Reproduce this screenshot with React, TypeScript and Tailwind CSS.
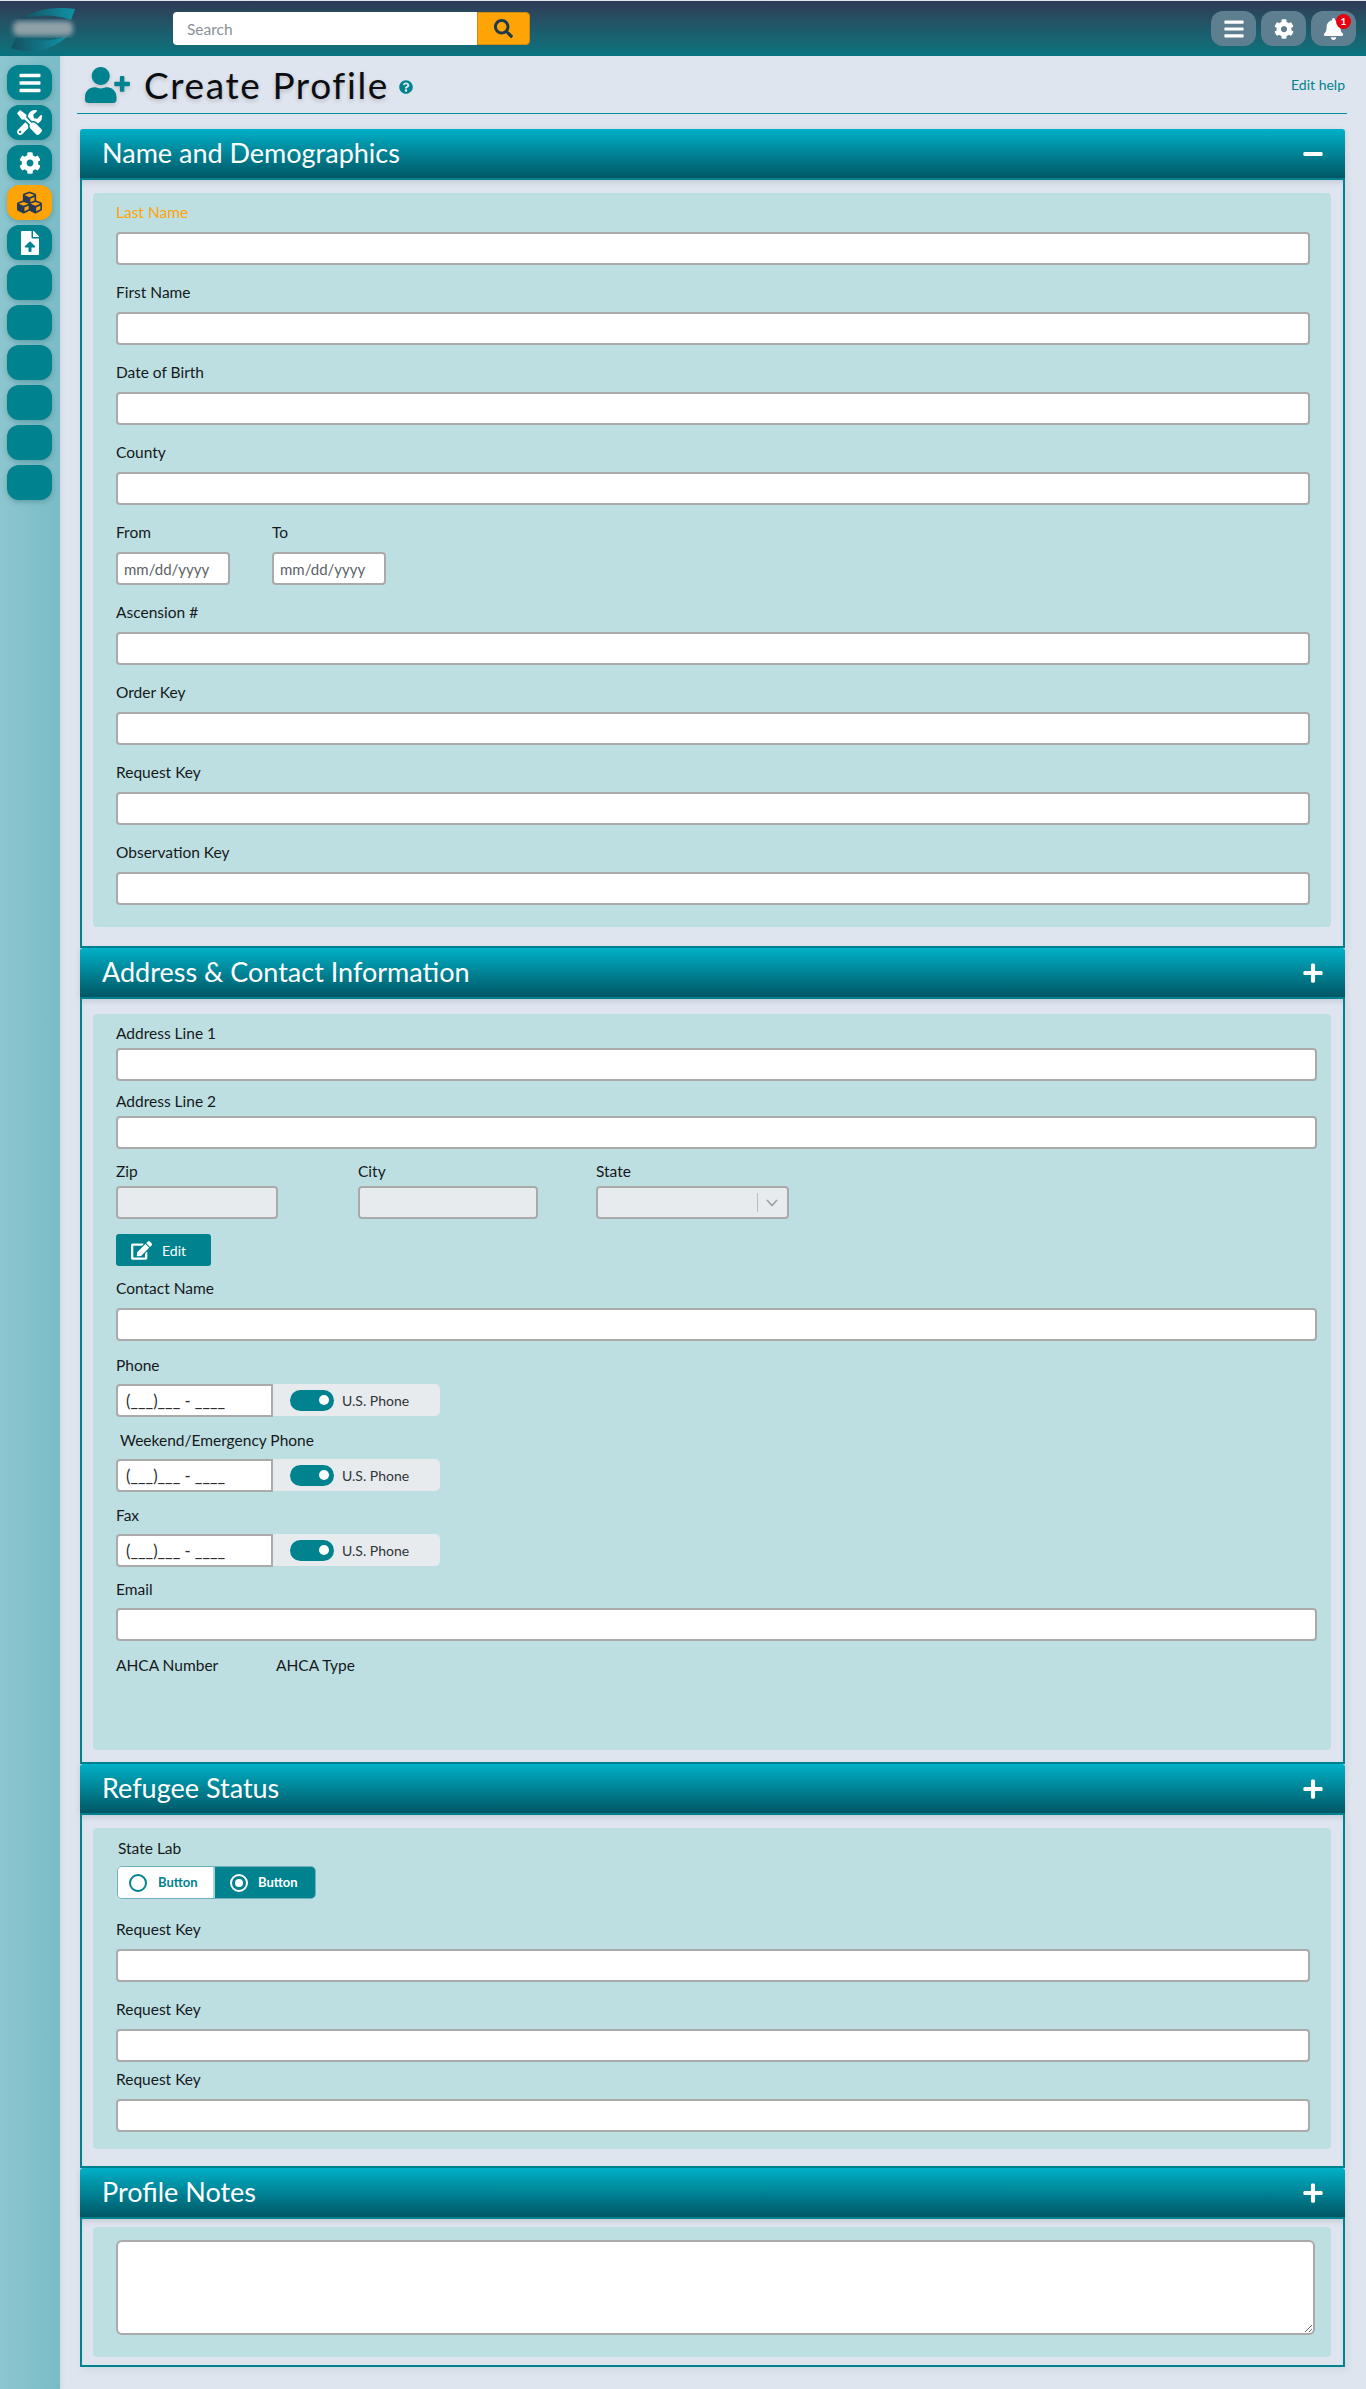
import React from 'react';
import {
    FaBars,
    FaBell,
    FaCog,
    FaCubes,
    FaEdit,
    FaFileUpload,
    FaMinus,
    FaPlus,
    FaQuestionCircle,
    FaSearch,
    FaTools,
    FaUserPlus
} from 'react-icons/fa';

const railBtn = "w-[45px] h-[35px] rounded-[12px] flex items-center justify-center text-white bg-[#00828f] shadow-[0_2px_5px_rgba(0,60,70,0.25)]";
const topBtn = "w-[45px] h-[35px] rounded-[12px] flex items-center justify-center text-white bg-[#5e7f90]";
const inputBase = "block h-[33px] border-2 border-[#aaaaaa] rounded-[4px] bg-white outline-none";
const disabledBase = "block h-[33px] border-2 border-[#aaaaaa] rounded-[4px] bg-[#e7ebee] outline-none";

function Logo() {
    return (
        <svg width="68" height="50" viewBox="0 0 68 50" className="ml-[9px]">
            <defs>
                <linearGradient id="arc" x1="0" y1="0" x2="1" y2="0">
                    <stop offset="0" stopColor="#14505f" />
                    <stop offset="1" stopColor="#0e93a6" />
                </linearGradient>
                <filter id="smear"><feGaussianBlur stdDeviation="2.5" /></filter>
            </defs>
            <path d="M12 16 C24 6 44 2 66 5 L62 16 C46 10 28 10 12 16 Z" fill="url(#arc)" />
            <path d="M2 44 L8 32 C24 38 40 38 58 32 C48 44 24 52 2 44 Z" fill="url(#arc)" />
            <rect x="4" y="17" width="60" height="15" rx="6" fill="#8fa0a8" filter="url(#smear)" />
        </svg>
    );
}

function Label({ children, className = "" }: { children: React.ReactNode; className?: string }) {
    return <div className={`h-[20px] leading-[20px] text-[15.5px] text-[#16191c] ${className}`}>{children}</div>;
}

function Field({ label, labelClass = "", mb = "mb-[17px]", w = "w-[1194px]" }: { label: string; labelClass?: string; mb?: string; w?: string }) {
    return (
        <div className={mb}>
            <Label className={`mb-[10px] ${labelClass}`}>{label}</Label>
            <input className={`${inputBase} ${w}`} />
        </div>
    );
}

function DateField({ label }: { label: string }) {
    return (
        <div className="w-[114px]">
            <Label className="mb-[10px]">{label}</Label>
            <input placeholder="mm/dd/yyyy" className={`${inputBase} w-[114px] pl-[6px] text-[15px] placeholder:text-[#5c6368]`} />
        </div>
    );
}

function PhoneField({ label, labelClass = "", mb = "mb-[13px]" }: { label: string; labelClass?: string; mb?: string }) {
    return (
        <div className={mb}>
            <Label className={`mb-[9px] ${labelClass}`}>{label}</Label>
            <div className="flex h-[33px]">
                <input
                    defaultValue="(___)___ - ____"
                    className="block w-[157px] h-[33px] border-2 border-[#aaaaaa] rounded-l-[4px] bg-white outline-none pl-[8px] text-[16.5px] text-[#2a2e31]"
                />
                <div className="w-[167px] h-[32px] bg-[#e7ebee] rounded-r-[5px] flex items-center pl-[17px]">
                    <div className="w-[44px] h-[21px] rounded-full bg-[#00828f] relative">
                        <span className="absolute right-[5px] top-[5px] w-[10px] h-[10px] rounded-full bg-white" />
                    </div>
                    <span className="ml-[8px] text-[14px] text-[#2f3538]">U.S. Phone</span>
                </div>
            </div>
        </div>
    );
}

function SectionHeader({ title, open = false }: { title: string; open?: boolean }) {
    return (
        <div className="h-[49px] pl-[22px] pr-[21px] flex items-center justify-between bg-gradient-to-b from-[#00b1c8] to-[#005866] rounded-t-[3px] shadow-[0_2px_6px_rgba(40,60,90,0.15)]">
            <h2 className="text-[27px] text-white font-normal leading-none pb-[2px]">{title}</h2>
            {open ? <FaMinus className="text-white w-[22px] h-[22px]" /> : <FaPlus className="text-white w-[22px] h-[22px]" />}
        </div>
    );
}

function Section({ title, open, children, panelClass, bodyClass = "" }: { title: string; open?: boolean; children: React.ReactNode; panelClass: string; bodyClass?: string }) {
    return (
        <section>
            <SectionHeader title={title} open={open} />
            <div className={`border-2 border-[#00828f] bg-[#dfe5ee] pl-[11px] pr-[12px] shadow-[inset_0_5px_6px_-3px_rgba(60,80,110,0.18),2px_3px_8px_rgba(40,60,90,0.08)] ${bodyClass}`}>
                <div className={`bg-[#bddfe1] rounded-[4px] pl-[23px] ${panelClass}`}>{children}</div>
            </div>
        </section>
    );
}

export default function App() {
    return (
        <div className="min-h-[2389px] w-[1366px] bg-[#dfe5ee] font-['Lato',_sans-serif] flex flex-col">
            {/* Top bar */}
            <header className="h-[56px] border-t border-[#dfe5ee] bg-gradient-to-b from-[#2e3b55] via-[#1d5a6a] to-[#07747f] flex items-center">
                <Logo />
                <div className="ml-[96px] flex items-center">
                    <input
                        placeholder="Search"
                        className="w-[304px] h-[33px] bg-white rounded-l-[4px] pl-[14px] text-[15.5px] outline-none placeholder:text-[#8b9197]"
                    />
                    <button className="w-[53px] h-[33px] bg-[#ffa406] border border-[#cf8a10] rounded-r-[4px] flex items-center justify-center">
                        <FaSearch className="w-[19px] h-[19px] text-[#1c3a4c]" />
                    </button>
                </div>
                <div className="ml-auto mr-[10px] flex gap-[5px]">
                    <button className={topBtn}><FaBars className="w-[22px] h-[22px]" /></button>
                    <button className={topBtn}><FaCog className="w-[20px] h-[20px]" /></button>
                    <button className={`${topBtn} relative`}>
                        <FaBell className="w-[21px] h-[22px]" />
                        <span className="absolute right-[5px] top-[3px] w-[15px] h-[15px] rounded-full bg-[#e8000f] text-white text-[10px] font-bold leading-[15px] text-center">1</span>
                    </button>
                </div>
            </header>

            <div className="flex flex-1">
                {/* Side rail */}
                <aside className="w-[60px] bg-gradient-to-r from-[#8cc6ce] to-[#7abcc6] pt-[9px] pl-[7px] flex flex-col gap-[5px] shadow-[2px_0_4px_rgba(60,80,110,0.08)]">
                    <div className={railBtn}><FaBars className="w-[24px] h-[24px]" /></div>
                    <div className={railBtn}><FaTools className="w-[25px] h-[25px]" /></div>
                    <div className={railBtn}><FaCog className="w-[22px] h-[22px]" /></div>
                    <div className={`${railBtn} !bg-[#ffa406]`}><FaCubes className="w-[25px] h-[25px] text-[#263a55]" /></div>
                    <div className={railBtn}><FaFileUpload className="w-[18px] h-[24px]" /></div>
                    <div className={railBtn} />
                    <div className={railBtn} />
                    <div className={railBtn} />
                    <div className={railBtn} />
                    <div className={railBtn} />
                    <div className={railBtn} />
                </aside>

                <main className="w-[1306px] pl-[17px] pr-[19px]">
                    {/* Page title */}
                    <div className="h-[58px] border-b border-[#00909f] flex items-center pl-[8px] relative">
                        <FaUserPlus className="w-[45px] h-[36px] text-[#00828f] drop-shadow-[0_2px_2px_rgba(0,0,0,0.15)]" />
                        <h1 className="ml-[14px] text-[37px] leading-none font-normal tracking-[1.6px] text-[#0b0d10] [text-shadow:0_2px_4px_rgba(0,0,0,0.2)]">Create Profile</h1>
                        <FaQuestionCircle className="ml-[10px] mt-[4px] w-[14px] h-[14px] text-[#00828f]" />
                        <a className="ml-auto mr-[2px] text-[14px] text-[#00828f]">Edit help</a>
                    </div>

                    <div className="mt-[15px] ml-[3px] mr-[2px] w-[1265px]">
                        <Section title="Name and Demographics" open panelClass="mt-[13px] mb-[19px] pt-[9px] pb-[5px]">
                            <Field label="Last Name" labelClass="!text-[#ffa406]" />
                            <Field label="First Name" />
                            <Field label="Date of Birth" />
                            <Field label="County" />
                            <div className="flex gap-[42px] mb-[17px]">
                                <DateField label="From" />
                                <DateField label="To" />
                            </div>
                            <Field label="Ascension #" />
                            <Field label="Order Key" />
                            <Field label="Request Key" />
                            <Field label="Observation Key" />
                        </Section>

                        <Section title="Address &amp; Contact Information" panelClass="mt-[15px] mb-[12px] pt-[9px] h-[736px]">
                            <Field label="Address Line 1" mb="mb-[10px]" w="w-[1201px]" labelClass="!mb-[5px]" />
                            <div className="hidden" />
                            <Field label="Address Line 2" mb="mb-[12px]" w="w-[1201px]" labelClass="!mb-[5px]" />
                            <div className="flex mb-[15px]">
                                <div className="w-[242px]">
                                    <Label className="mb-[5px]">Zip</Label>
                                    <input disabled className={`${disabledBase} w-[162px]`} />
                                </div>
                                <div className="w-[238px]">
                                    <Label className="mb-[5px]">City</Label>
                                    <input disabled className={`${disabledBase} w-[180px]`} />
                                </div>
                                <div>
                                    <Label className="mb-[5px]">State</Label>
                                    <div className={`${disabledBase} w-[193px] flex items-center justify-end pr-[9px]`}>
                                        <span className="w-px h-[19px] bg-[#b9bec2] mr-[8px]" />
                                        <svg width="12" height="8" viewBox="0 0 12 8" fill="none" stroke="#9a9fa3" strokeWidth="1.6"><path d="M1 1l5 5.5L11 1" /></svg>
                                    </div>
                                </div>
                            </div>
                            <button className="w-[95px] h-[32px] rounded-[3px] bg-[#00828f] text-white text-[14px] flex items-center pl-[15px] gap-[10px] mb-[12px]">
                                <FaEdit className="w-[21px] h-[19px]" />
                                Edit
                            </button>
                            <Field label="Contact Name" w="w-[1201px]" mb="mb-[14px]" labelClass="!mb-[10px]" />
                            <PhoneField label="Phone" />
                            <PhoneField label="Weekend/Emergency Phone" labelClass="pl-[4px]" />
                            <PhoneField label="Fax" mb="mb-[12px]" />
                            <Field label="Email" w="w-[1201px]" mb="mb-[14px]" labelClass="!mb-[9px]" />
                            <div className="flex">
                                <Label className="w-[160px]">AHCA Number</Label>
                                <Label>AHCA Type</Label>
                            </div>
                        </Section>

                        <Section title="Refugee Status" panelClass="mt-[13px] mb-[17px] pt-[10px] h-[321px]">
                            <Label className="pl-[2px] mb-[8px]">State Lab</Label>
                            <div className="flex w-[199px] h-[33px] ml-[1px] mb-[20px] rounded-[5px] border border-[#6db3bd] overflow-hidden">
                                <div className="w-[97px] bg-white border-r-2 border-[#a9d4d9] flex items-center pl-[11px] gap-[11px] text-[13px] font-bold text-[#00828f]">
                                    <span className="w-[18px] h-[18px] rounded-full border-2 border-[#00828f]" />
                                    Button
                                </div>
                                <div className="flex-1 bg-[#00828f] flex items-center pl-[15px] gap-[10px] text-[13px] font-bold text-white">
                                    <span className="w-[18px] h-[18px] rounded-full border-2 border-white flex items-center justify-center">
                                        <span className="w-[8px] h-[8px] rounded-full bg-white" />
                                    </span>
                                    Button
                                </div>
                            </div>
                            <Field label="Request Key" />
                            <Field label="Request Key" mb="mb-[7px]" />
                            <Field label="Request Key" mb="mb-0" />
                        </Section>

                        <Section title="Profile Notes" panelClass="mt-[8px] mb-[8px] pt-[13px] h-[130px]">
                            <textarea className="block w-[1199px] h-[95px] border-2 border-[#aaaaaa] rounded-[6px] bg-white outline-none" />
                        </Section>
                    </div>
                </main>
            </div>
        </div>
    );
}
